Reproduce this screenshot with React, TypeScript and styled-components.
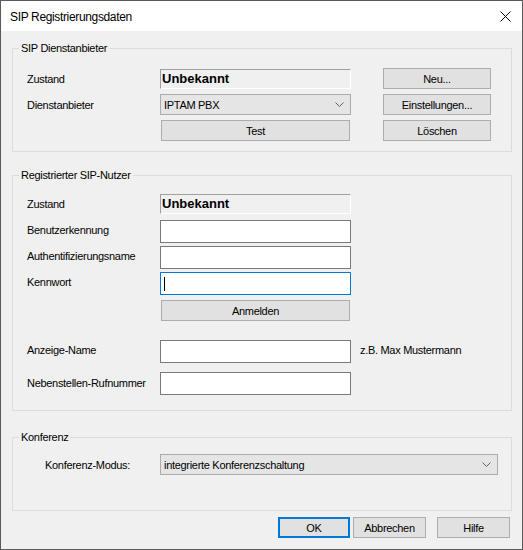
import styled, { createGlobalStyle } from "styled-components";

const GlobalStyle = createGlobalStyle`
  html, body {
    margin: 0;
    padding: 0;
    background: #ffffff;
  }
  * {
    box-sizing: border-box;
  }
`;

const FONT = `"Liberation Sans", Arial, sans-serif`;

const Window = styled.div`
  width: 523px;
  height: 550px;
  border: 1px solid #5a5a5a;
  display: flex;
  flex-direction: column;
  font-family: ${FONT};
  font-size: 11px;
  letter-spacing: -0.3px;
  color: #000;
`;

const TitleBar = styled.div`
  height: 30px;
  flex: none;
  background: #ffffff;
  display: flex;
  align-items: center;
  justify-content: space-between;
  padding: 0 9px 0 9px;
`;

const Title = styled.span`
  font-size: 12px;
  letter-spacing: -0.35px;
  padding-top: 1px;
`;

const CloseIcon = styled.svg`
  width: 11px;
  height: 11px;
  margin-right: 2px;
  margin-top: 1px;
`;

const Body = styled.div`
  flex: 1;
  background: #f0f0f0;
  display: flex;
  flex-direction: column;
  padding: 11px 10px 0 11px;
`;

const Group = styled.fieldset<{ $mt?: number }>`
  margin: ${(p) => p.$mt ?? 0}px 0 0 0;
  padding: 0;
  min-width: 0;
  border: 1px solid #dcdcdc;
`;

const Legend = styled.legend`
  margin-left: 6px;
  padding: 0 2px;
  line-height: 13px;
  font-size: 11px;
`;

const ProviderGrid = styled.div`
  display: grid;
  grid-template-columns: 133px 223px 108px;
  grid-auto-rows: 21px;
  row-gap: 5px;
  align-items: center;
  padding: 13px 0 10px 14px;
`;

const Stack = styled.div<{ $pt: number; $pb: number; $pl: number }>`
  display: flex;
  flex-direction: column;
  padding: ${(p) => p.$pt}px 0 ${(p) => p.$pb}px ${(p) => p.$pl}px;
`;

const Row = styled.div<{ $mt: number; $h: number; $label: number }>`
  display: grid;
  grid-template-columns: ${(p) => p.$label}px auto auto;
  justify-content: start;
  align-items: center;
  margin-top: ${(p) => p.$mt}px;
  height: ${(p) => p.$h}px;
`;

const Label = styled.span<{ $lift?: number }>`
  white-space: nowrap;
  padding-bottom: ${(p) => (p.$lift ?? 0) * 2}px;
`;

const Status = styled.div<{ $w?: number }>`
  width: ${(p) => p.$w ?? 191}px;
  height: 20px;
  background: #f0f0f0;
  border-top: 1px solid #a0a0a0;
  border-left: 1px solid #a0a0a0;
  border-bottom: 1px solid #ffffff;
  border-right: 1px solid #ffffff;
  font-weight: bold;
  font-size: 13px;
  letter-spacing: 0;
  line-height: 18px;
  padding-left: 1px;
`;

const Select = styled.div<{ $w?: number }>`
  width: ${(p) => p.$w ?? 191}px;
  height: 21px;
  background: #e5e5e5;
  border: 1px solid #acacac;
  display: flex;
  align-items: center;
  justify-content: space-between;
  padding: 0 6px 0 3px;
`;

const Chevron = styled.svg`
  width: 9px;
  height: 6px;
`;

const Button = styled.div<{ $w?: number; $default?: boolean; $ml?: number }>`
  width: ${(p) => p.$w ?? 108}px;
  height: 21px;
  margin-left: ${(p) => p.$ml ?? 0}px;
  background: #e1e1e1;
  border: ${(p) => (p.$default ? "2px solid #0078d7" : "1px solid #adadad")};
  display: flex;
  align-items: center;
  justify-content: center;
  padding-top: 1px;
`;

const Field = styled.div<{ $focus?: boolean }>`
  width: 191px;
  height: 23px;
  background: #ffffff;
  border: 1px solid ${(p) => (p.$focus ? "#0078d7" : "#7a7a7a")};
  display: flex;
  align-items: center;
  padding-left: 3px;
`;

const Caret = styled.span`
  width: 1px;
  height: 14px;
  background: #000;
`;

const Hint = styled.span`
  white-space: nowrap;
  margin-left: 9px;
  padding-bottom: 3px;
`;

const ButtonBar = styled.div`
  display: flex;
  justify-content: flex-end;
  margin-top: 6px;
  padding-right: 2px;
`;

const ChevronDown = () => (
  <Chevron viewBox="0 0 9 6">
    <polyline points="0.5,0.5 4.5,4.5 8.5,0.5" fill="none" stroke="#606060" strokeWidth="1" />
  </Chevron>
);

export default function App() {
  return (
    <>
      <GlobalStyle />
      <Window>
        <TitleBar>
          <Title>SIP Registrierungsdaten</Title>
          <CloseIcon viewBox="0 0 11 11">
            <line x1="0.5" y1="0.5" x2="10.5" y2="10.5" stroke="#000" strokeWidth="1" />
            <line x1="10.5" y1="0.5" x2="0.5" y2="10.5" stroke="#000" strokeWidth="1" />
          </CloseIcon>
        </TitleBar>
        <Body>
          <Group>
            <Legend>SIP Dienstanbieter</Legend>
            <ProviderGrid>
              <Label>Zustand</Label>
              <Status>Unbekannt</Status>
              <Button>Neu...</Button>
              <Label>Dienstanbieter</Label>
              <Select>
                <span>IPTAM PBX</span>
                <ChevronDown />
              </Select>
              <Button>Einstellungen...</Button>
              <span />
              <Button $w={189} $ml={1}>Test</Button>
              <Button>Löschen</Button>
            </ProviderGrid>
          </Group>

          <Group $mt={17}>
            <Legend>Registrierter SIP-Nutzer</Legend>
            <Stack $pt={0} $pb={15} $pl={14}>
              <Row $mt={12} $h={20} $label={133}>
                <Label>Zustand</Label>
                <Status>Unbekannt</Status>
              </Row>
              <Row $mt={6} $h={23} $label={133}>
                <Label $lift={2}>Benutzerkennung</Label>
                <Field />
              </Row>
              <Row $mt={3} $h={23} $label={133}>
                <Label $lift={2}>Authentifizierungsname</Label>
                <Field />
              </Row>
              <Row $mt={3} $h={23} $label={133}>
                <Label $lift={2}>Kennwort</Label>
                <Field $focus>
                  <Caret />
                </Field>
              </Row>
              <Row $mt={5} $h={21} $label={133}>
                <span />
                <Button $w={189} $ml={1}>Anmelden</Button>
              </Row>
              <Row $mt={19} $h={23} $label={133}>
                <Label $lift={2}>Anzeige-Name</Label>
                <Field />
                <Hint>z.B. Max Mustermann</Hint>
              </Row>
              <Row $mt={9} $h={23} $label={133}>
                <Label $lift={1}>Nebenstellen-Rufnummer</Label>
                <Field />
              </Row>
            </Stack>
          </Group>

          <Group $mt={20}>
            <Legend>Konferenz</Legend>
            <Stack $pt={0} $pb={35} $pl={32}>
              <Row $mt={10} $h={21} $label={115}>
                <Label>Konferenz-Modus:</Label>
                <Select $w={338}>
                  <span>integrierte Konferenzschaltung</span>
                  <ChevronDown />
                </Select>
              </Row>
            </Stack>
          </Group>

          <ButtonBar>
            <Button $w={72} $default>OK</Button>
            <Button $w={73} $ml={3}>Abbrechen</Button>
            <Button $w={73} $ml={11}>Hilfe</Button>
          </ButtonBar>
        </Body>
      </Window>
    </>
  );
}
